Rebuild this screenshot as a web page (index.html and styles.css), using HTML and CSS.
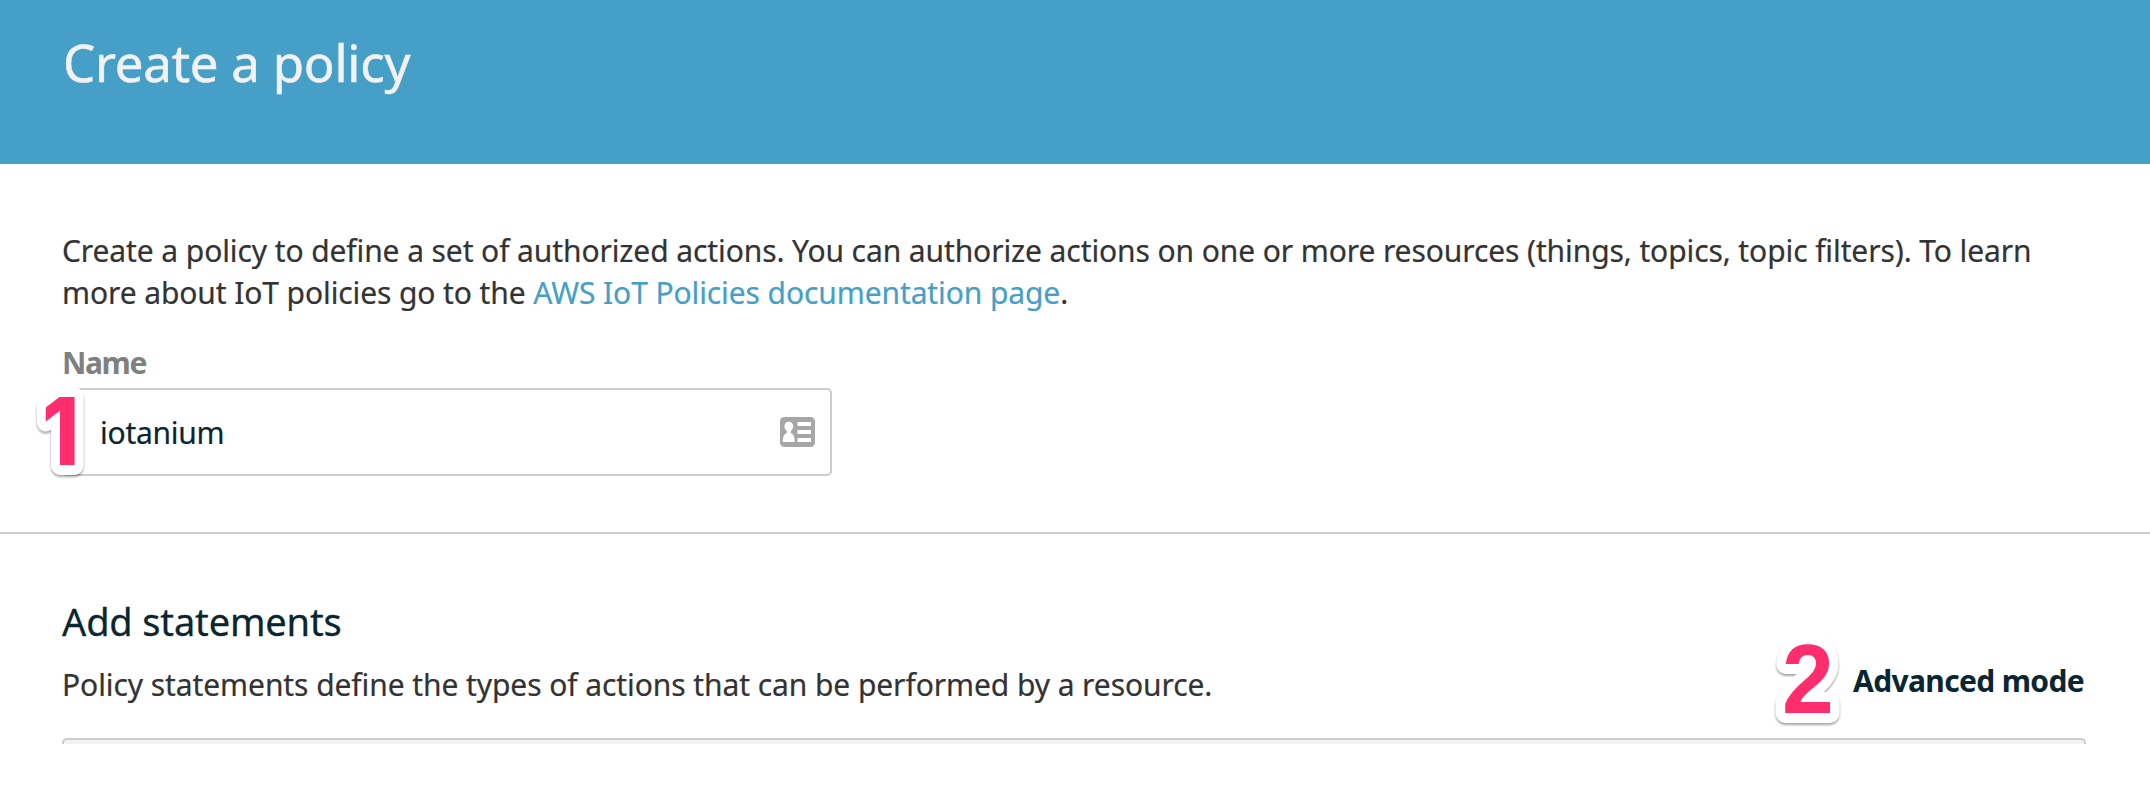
FILE: index.html
```
<!DOCTYPE html>
<html lang="en">
<head>
<meta charset="utf-8">
<title>Create a policy</title>
<link rel="stylesheet" href="styles.css">
</head>
<body>
<header class="banner"><h1 class="title">Create a policy</h1></header>
<main>
<section class="intro">
<p class="copy">Create a policy to define a set of authorized actions. You can authorize actions on one or more resources (things, topics, topic filters). To learn<br>more about IoT policies go to the <a class="link">AWS IoT Policies documentation page</a>.</p>
<div class="label">Name</div>
<div class="field"><span class="value">iotanium</span>
<svg class="card-icon" viewBox="0 0 35 30"><rect width="35" height="30" rx="4.5" fill="#a6a6a6"/><g fill="#fff"><ellipse cx="8.8" cy="9.5" rx="4.4" ry="4.8"/><path d="M6.800 12h4v4c2.500 1 4 3 4 9H2.800c0-6 1.500-8 4-9z"/><path d="M17.500 5h13.500v4h-13.500zM17.500 13h13.500v4h-13.500zM17.500 21h13.500v4h-13.500z"/></g></svg>
<svg class="badge badge-one" width="60" height="105"><text transform="translate(12 85) scale(.9 1)">1</text></svg></div>
</section>
<section class="statements">
<div><h2 class="heading">Add statements</h2><p class="summary">Policy statements define the types of actions that can be performed by a resource.</p></div>
<div class="mode">Advanced mode<svg class="badge badge-two" width="85" height="110"><text transform="translate(12 89) scale(.95 1)">2</text></svg></div>
</section>
<div class="panel"></div>
</main>
</body>
</html>
```
FILE: styles.css
```
* { box-sizing: border-box; }
body { margin: 0; height: 804px; overflow: hidden; background: #fff; color: #333; font: 30px/42px "Noto Sans", sans-serif; }
h1, h2, p { margin: 0; font-weight: 400; white-space: nowrap; }
.banner { height: 164px; padding: 28px 63px; background: #459fc6; }
.title { color: #f2f2f2; font-size: 51px; line-height: 68px; letter-spacing: -.25px; -webkit-text-stroke: .5px #f2f2f2; }
.intro { height: 370px; padding: 66px 62px 0; border-bottom: 2px solid #ccc; }
.copy { letter-spacing: -.1px; -webkit-text-stroke: .2px; }
.link { color: #459fc6; }
.label { margin-top: 28px; color: #808080; font-weight: 700; letter-spacing: -1.4px; }
.field { position: relative; display: flex; align-items: center; justify-content: space-between; width: 770px; height: 88px; margin-top: 4px; padding: 0 15px 0 36px; border: 2px solid #ccc; border-radius: 5px; color: #0a2630; }
.value { padding-top: 1px; letter-spacing: -.25px; -webkit-text-stroke: .2px; }
.card-icon { width: 35px; height: 30px; }
.statements { display: flex; justify-content: space-between; height: 204px; padding: 59px 66px 0 62px; }
.heading { color: #0a2630; font-size: 38px; line-height: 56px; letter-spacing: -.15px; -webkit-text-stroke: .3px #0a2630; }
.summary { margin-top: 15px; letter-spacing: -.08px; -webkit-text-stroke: .2px; }
.mode { position: relative; padding-top: 67px; color: #0a2630; font-weight: 700; letter-spacing: -.65px; white-space: nowrap; }
.panel { height: 6px; margin: 0 64px 0 62px; border: 2px solid #ccc; border-bottom: 0; border-radius: 5px 5px 0 0; background: #f2f2f2; }
.badge { position: absolute; overflow: visible; letter-spacing: 0; filter: drop-shadow(0 2px 1px rgba(0,0,0,.35)); }
.badge text { fill: #ff2d6e; stroke: #fff; stroke-width: 20px; stroke-linejoin: round; paint-order: stroke fill; }
.badge-one { left: -34px; top: -10px; font: 800 94px Inter, sans-serif; }
.badge-two { left: -83px; top: 31px; font: 700 98px "Liberation Sans", sans-serif; }
```
